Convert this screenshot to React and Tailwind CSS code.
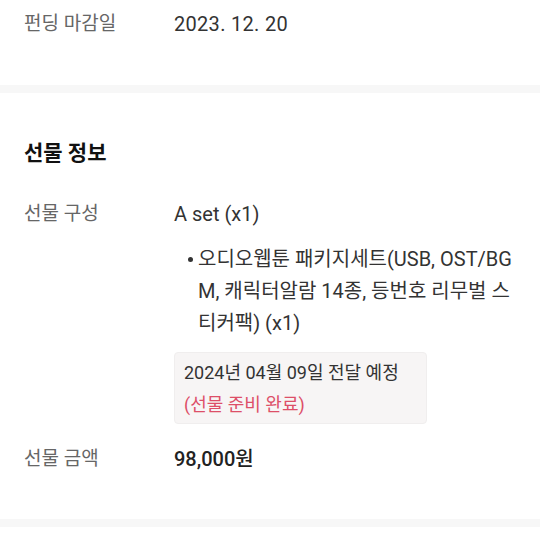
import React from 'react';

const font = { fontFamily: 'Roboto, "Noto Sans CJK KR", sans-serif' };

const Row = ({ label, children, className = '' }) => (
    <div className={`flex ${className}`}>
        <div className="w-[150px] shrink-0 text-[19px] leading-[32px] text-[#666]">{label}</div>
        <div className="flex-1 min-w-0 text-[19px] leading-[32px] text-[#333]">{children}</div>
    </div>
);

const App = () => {
    return (
        <div className="w-[540px] h-[540px] bg-white overflow-hidden" style={font}>
            <div className="px-6 pt-2 pb-[44px]">
                <Row label="펀딩 마감일">
                    <span className="text-[20px] tracking-[0.3px]">2023. 12. 20</span>
                </Row>
            </div>
            <div className="h-2 bg-[#f7f7f7]" />
            <div className="px-6 pt-[44px] pb-[43px]">
                <h2 className="text-[21px] font-bold leading-[32px] text-[#111]">선물 정보</h2>
                <Row label="선물 구성" className="mt-[29px]">
                    <div className="text-[20px]">A set (x1)</div>
                    <ul className="mt-[13px] pl-[14px]">
                        <li className="relative break-all pl-[10px] text-[20px]">
                            <span className="absolute left-0 top-[14px] w-[5px] h-[5px] rounded-full bg-[#333]" />
                            오디오웹툰 패키지세트(USB, OST/BGM, 캐릭터알람 14종, 등번호 리무벌 스티커팩) (x1)
                        </li>
                    </ul>
                    <div className="mt-[13px] w-[253px] rounded-[4px] border border-[#f0eeee] bg-[#f7f5f5] px-[9px] pt-[4px] pb-[2px] text-[18px]">
                        <div className="text-[#333]">2024년 04월 09일 전달 예정</div>
                        <div className="text-[#dd4f68]">(선물 준비 완료)</div>
                    </div>
                </Row>
                <Row label="선물 금액" className="mt-[19px]">
                    <span className="text-[20px] font-medium text-[#222]">98,000원</span>
                </Row>
            </div>
            <div className="h-2 bg-[#f7f7f7]" />
        </div>
    );
};

export default App;
